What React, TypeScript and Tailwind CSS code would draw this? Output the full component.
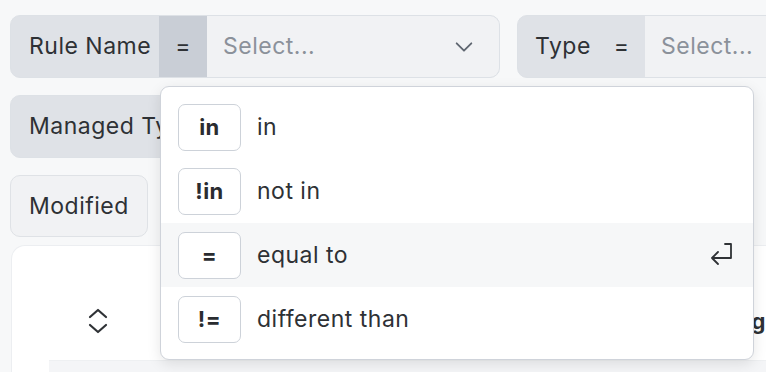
import React from "react";

const font = { fontFamily: "Inter, 'Noto Sans', sans-serif" };

function ChevronDown() {
  return (
    <svg width="22" height="22" viewBox="0 0 24 24" fill="none" stroke="#5f6670" strokeWidth="2" strokeLinecap="round" strokeLinejoin="round">
      <path d="m4 8 8 8 8-8" />
    </svg>
  );
}

function ChevronsUpDown() {
  return (
    <svg width="22" height="28" viewBox="0 0 22 28" fill="none" stroke="#2f3236" strokeWidth="2.2" strokeLinecap="round" strokeLinejoin="round">
      <path d="M3 10 11 3l8 7" />
      <path d="M3 18l8 7 8-7" />
    </svg>
  );
}

function EnterIcon() {
  return (
    <svg width="26" height="26" viewBox="0 0 26 26" fill="none" stroke="#2f3236" strokeWidth="1.8" strokeLinecap="round" strokeLinejoin="round">
      <path d="M16 2h6v14H4" />
      <path d="M9 10l-6 6 6 6" />
    </svg>
  );
}

const items = [
  { b: "in", l: "in" },
  { b: "!in", l: "not in" },
  { b: "=", l: "equal to", active: true },
  { b: "!=", l: "different than" },
];

export default function App() {
  return (
    <div className="relative w-[766px] h-[372px] overflow-hidden bg-[#f7f8f9] text-[#2e3135] tracking-[0.5px]" style={font}>
      <div className="flex flex-col gap-[17px] pl-[10px] pt-[15px]">
        {/* Row 1 */}
        <div className="flex gap-[17px]">
          <div className="flex h-[63px] w-[490px] shrink-0 overflow-hidden rounded-[10px] border border-[#dde1e6] bg-[#dfe2e7]">
            <div className="flex w-[148px] items-center pl-[18px] text-[23px]">Rule Name</div>
            <div className="flex w-[48px] items-center justify-center bg-[#c9ced6] text-[23px]">=</div>
            <div className="flex flex-1 items-center justify-between bg-[#f1f2f4] pl-[16px] pr-[24px]">
              <span className="text-[23px] text-[#8b919a]">Select...</span>
              <ChevronDown />
            </div>
          </div>
          <div className="flex h-[63px] w-[400px] shrink-0 overflow-hidden rounded-[10px] border border-[#dde1e6] bg-[#dfe2e7]">
            <div className="flex w-[80px] items-center pl-[17px] text-[23px]">Type</div>
            <div className="flex w-[47px] items-center justify-center text-[23px]">=</div>
            <div className="flex flex-1 items-center bg-[#f1f2f4] pl-[16px]">
              <span className="text-[23px] text-[#8b919a]">Select...</span>
            </div>
          </div>
        </div>
        {/* Row 2 */}
        <div className="flex">
          <div className="flex h-[63px] w-[400px] items-center rounded-[10px] border border-[#dde1e6] bg-[#dfe2e7] pl-[18px] text-[23px]">
            Managed Type
          </div>
        </div>
        {/* Row 3 */}
        <div className="flex">
          <div className="flex h-[62px] w-[138px] items-center rounded-[10px] border border-[#dfe2e6] bg-[#f1f2f4] pl-[18px] text-[23px]">
            Modified
          </div>
        </div>
      </div>

      {/* Card */}
      <div className="ml-[11px] mt-[8px] h-[200px] rounded-tl-[14px] border-l border-t border-[#eceef1] bg-white">
        <div className="flex h-[114px] items-center">
          <div className="flex w-[172px] justify-center pt-[36px]">
            <ChevronsUpDown />
          </div>
          <div className="flex-1 pt-[36px] text-right text-[22px] font-bold whitespace-nowrap">
            <span>Setting</span>
          </div>
        </div>
        <div className="ml-[37px] h-[20px] border-t border-[#eef0f2] bg-[#f4f5f7]" />
      </div>

      {/* Dropdown */}
      <div className="absolute left-[160px] top-[86px] w-[594px] rounded-[9px] border border-[#cfd3da] bg-white py-[8px] shadow-[0_4px_14px_rgba(0,0,0,0.10)]">
        {items.map((it) => (
          <div key={it.b} className={`flex h-[64px] items-center px-[17px] ${it.active ? "bg-[#f6f7f8]" : ""}`}>
            <div className="flex h-[47px] w-[63px] items-center justify-center rounded-[7px] border-[1.5px] border-[#cdd2d9] bg-white text-[22px] font-bold text-[#2a2c30]">
              {it.b}
            </div>
            <div className="ml-[16px] flex-1 text-[23px]">{it.l}</div>
            {it.active && (
              <div className="mr-[1px]">
                <EnterIcon />
              </div>
            )}
          </div>
        ))}
      </div>
    </div>
  );
}
